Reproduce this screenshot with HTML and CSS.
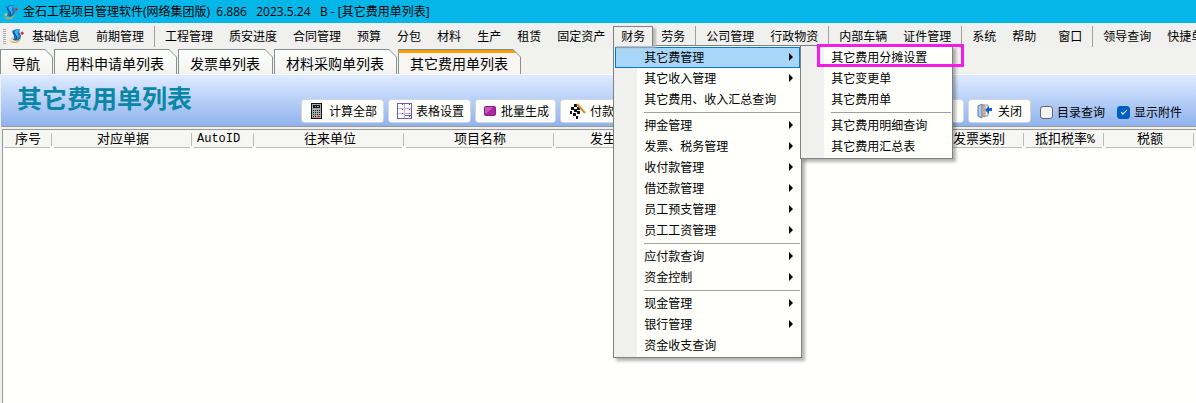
FILE: index.html
```html
<!DOCTYPE html>
<html lang="zh-CN">
<head>
    <meta charset="UTF-8">
    <meta name="viewport" content="width=device-width, initial-scale=1.0">
    <title>其它费用单列表</title>
    <link rel="stylesheet" href="styles.css">
</head>
<body>

<svg class="defs" width="0" height="0">
    <symbol id="logo" viewBox="0 0 16 16">
        <path d="M4 2Q8 0 12 1Q10 3 12 6Q14 9 11 12Q8 14 4 12Q6 10 5 7Q3 4 4 2Z" fill="#0b78c8"/>
        <path d="M6 3Q8 1 11 2Q8 4 10 7Q11 9 9 11Q9 8 7 6Z" fill="#3fb6f2"/>
        <path d="M4 3Q5 6 8 8Q9 10 7 12" fill="none" stroke="#123a78"/>
        <path d="M0 12Q3 15 8 14Q12 12 13 8Q13 13 9 15Q3 17 0 12Z" fill="#e9a63a"/>
        <path d="M1 11Q3 9 5 9Q3 11 5 13Z" fill="#f3c56c"/>
        <path d="M14 3L15 4L16 5L15 6L14 7L13 6L12 5L13 4Z" fill="#e0262b"/>
    </symbol>
</svg>

<header class="titlebar">
    <svg class="logo"><use href="#logo"/></svg>
    <span class="caption">金石工程项目管理软件(网络集团版)  6.886   2023.5.24   B - [其它费用单列表]</span>
</header>

<nav class="menubar">
    <span class="grip"></span>
    <svg class="logo"><use href="#logo"/></svg>
    <button>基础信息</button>
    <button>前期管理</button>
    <i class="sep"></i>
    <button>工程管理</button>
    <button>质安进度</button>
    <button>合同管理</button>
    <button>预算</button>
    <button>分包</button>
    <button>材料</button>
    <button>生产</button>
    <button>租赁</button>
    <button>固定资产</button>
    <div class="menu-open">
        <button class="current">财务</button>
        <ul class="menu">
            <li class="active">
                <button class="more">其它费管理</button>
                <ul class="menu submenu">
                    <li class="marked"><button>其它费用分摊设置</button></li>
                    <li><button>其它变更单</button></li>
                    <li><button>其它费用单</button></li>
                    <li class="line"></li>
                    <li><button>其它费用明细查询</button></li>
                    <li><button>其它费用汇总表</button></li>
                </ul>
            </li>
            <li><button class="more">其它收入管理</button></li>
            <li><button>其它费用、收入汇总查询</button></li>
            <li class="line"></li>
            <li><button class="more">押金管理</button></li>
            <li><button class="more">发票、税务管理</button></li>
            <li><button class="more">收付款管理</button></li>
            <li><button class="more">借还款管理</button></li>
            <li><button class="more">员工预支管理</button></li>
            <li><button class="more">员工工资管理</button></li>
            <li class="line"></li>
            <li><button class="more">应付款查询</button></li>
            <li><button class="more">资金控制</button></li>
            <li class="line"></li>
            <li><button class="more">现金管理</button></li>
            <li><button class="more">银行管理</button></li>
            <li><button>资金收支查询</button></li>
        </ul>
    </div>
    <button>劳务</button>
    <i class="sep"></i>
    <button>公司管理</button>
    <button>行政物资</button>
    <i class="sep"></i>
    <button>内部车辆</button>
    <button>证件管理</button>
    <i class="sep"></i>
    <button>系统</button>
    <button>帮助</button>
    <button class="window">窗口</button>
    <i class="sep"></i>
    <button>领导查询</button>
    <button>快捷单</button>
</nav>

<div class="tabs" role="tablist">
    <button class="tab" role="tab"><span>导航</span></button>
    <button class="tab" role="tab"><span>用料申请单列表</span></button>
    <button class="tab" role="tab"><span>发票单列表</span></button>
    <button class="tab" role="tab"><span>材料采购单列表</span></button>
    <button class="tab selected" role="tab" aria-selected="true"><span>其它费用单列表</span></button>
</div>

<section class="toolbar">
    <h1>其它费用单列表</h1>
    <div class="actions">
        <button>
            <svg viewBox="0 0 16 16" shape-rendering="crispEdges">
                <path d="M2 0H13V16H2Z" fill="#111"/>
                <path d="M3 1H12V15H3Z" fill="#aaa"/>
                <path d="M4 2H11V5H4Z" fill="#111"/>
                <path d="M6 3H7V4H6ZM8 3H10V4H8Z" fill="#2bd5e8"/>
                <path d="M4 7H5V8H4ZM6 7H7V8H6ZM8 7H9V8H8ZM10 7H11V8H10ZM4 9H5V10H4ZM6 9H7V10H6ZM8 9H9V10H8ZM10 9H11V10H10ZM4 11H5V12H4ZM6 11H7V12H6ZM8 11H9V12H8ZM10 11H11V12H10ZM4 13H5V14H4ZM6 13H7V14H6Z" fill="#222"/>
                <path d="M8 13H11V14H8Z" fill="#e3221b"/>
            </svg>
            计算全部
        </button>
        <button>
            <svg viewBox="0 0 16 16" shape-rendering="crispEdges">
                <path d="M1 0H16V16H1Z" fill="#6a5fc0"/>
                <path d="M2 1H8V5H2ZM9 1H15V5H9ZM2 6H8V10H2ZM9 6H15V10H9ZM2 11H8V15H2ZM9 11H15V12H9ZM9 13H15V15H9Z" fill="#fff"/>
                <path d="M8 1H9V15H8ZM2 5H15V6H2ZM2 10H15V11H2Z" fill="#b9b4ea"/>
                <path d="M6 1H7V2H6ZM13 1H14V2H13ZM6 6H7V7H6ZM13 6H14V7H13ZM6 10H7V11H6ZM13 10H14V11H13ZM13 13H14V14H13Z" fill="#d81e3c"/>
            </svg>
            表格设置
        </button>
        <button>
            <svg class="narrow" viewBox="1 0 14 16">
                <rect x="2" y="3" width="12" height="10" rx="2" fill="#8c1a86"/>
                <path d="M3 5Q3 4 4 4H12L4 11Q3 11 3 10Z" fill="#c558bd"/>
                <path d="M12 4Q13 4 13 5V11Q13 12 12 12H4Z" fill="#a92a9f"/>
            </svg>
            批量生成
        </button>
        <button>
            <svg class="wide" viewBox="0 0 18 16">
                <path d="M7 1L13 6L9 14L2 9Z" fill="#fff"/>
                <path d="M6 1H9V4H6ZM3 4H6V7H3ZM9 4H12V7H9ZM6 6H9V9H6ZM2 8H4V11H2ZM9 8H12V11H9ZM5 10H8V13H5ZM8 13H10V16H8Z" fill="#111"/>
                <path d="M9 1L17 10" stroke="#d28a2a" stroke-width="2"/>
            </svg>
            付款
        </button>
    </div>
    <div class="actions right">
        <button class="print">
            <svg viewBox="0 0 16 16"><path d="M2 6H14V12H2ZM4 2H12V6H4Z" fill="#8091a8"/></svg>
            打印
        </button>
        <button>
            <svg viewBox="0 0 16 16">
                <path d="M5 2H12V13H5Z" fill="#eef2f8" stroke="#8a98b4"/>
                <path d="M2 3L6 1V15L2 13Z" fill="#a9cdf0" stroke="#5878ac"/>
                <path d="M7 2L9 3V14L7 13Z" fill="#f6c9a0" stroke="#b88868"/>
                <path d="M16 5V8H13V11L9 7L13 3V5Z" fill="#0f5fd6"/>
            </svg>
            关闭
        </button>
        <label><input type="checkbox">目录查询</label>
        <label><input type="checkbox" checked>显示附件</label>
    </div>
</section>

<main class="grid">
    <table>
        <colgroup>
            <col class="w50"><col class="w140"><col class="w62"><col class="w150"><col class="w150">
            <col class="w122"><col class="w256"><col class="w92"><col class="w80"><col class="w90"><col class="w90">
        </colgroup>
        <thead>
            <tr>
                <th>序号</th>
                <th>对应单据</th>
                <th class="left">AutoID</th>
                <th>往来单位</th>
                <th>项目名称</th>
                <th>发生金额</th>
                <th></th>
                <th>发票类别</th>
                <th>抵扣税率%</th>
                <th>税额</th>
                <th></th>
            </tr>
        </thead>
    </table>
</main>

</body>
</html>
```
FILE: styles.css
```css
* {
    box-sizing: border-box;
}
body {
    margin: 0;
    min-height: 100vh;
    display: flex;
    flex-direction: column;
    overflow: hidden;
    background: #f0f0ee;
    color: #000;
    font: 12px/20px "Noto Sans CJK SC", sans-serif;
}
button {
    margin: 0;
    padding: 0;
    border: 0;
    background: none;
    color: inherit;
    font: inherit;
    white-space: nowrap;
}
.defs {
    position: absolute;
}
.logo {
    flex: none;
    width: 15px;
    height: 16px;
}

/* title bar */
.titlebar {
    display: flex;
    align-items: center;
    height: 23px;
    padding-left: 3px;
    gap: 5px;
    background: #04b7e8;
    font-family: "Open Sans", "Noto Sans CJK SC", sans-serif;
}
.caption {
    white-space: pre;
}

/* menu bar */
.menubar {
    display: flex;
    align-items: center;
    height: 26px;
    padding-left: 3px;
    white-space: nowrap;
}
.menubar > button,
.current {
    flex: none;
    padding: 0 8px;
}
.menubar > .window {
    margin-left: 6px;
}
.grip {
    flex: none;
    width: 3px;
    height: 15px;
    margin-right: 3px;
    background: repeating-linear-gradient(#aaa 0 1px, transparent 1px 2px);
}
.sep {
    flex: none;
    width: 1px;
    height: 21px;
    margin: 0 2px;
    background: #a0a0a0;
}
.menu-open {
    position: relative;
    flex: none;
}
.current {
    position: relative;
    z-index: 3;
    height: 20px;
    line-height: 18px;
    background: #f0f0ee;
    box-shadow: inset 1px 1px #808080, inset -1px 0 #808080, 3px 2px 2px #bbb;
}

/* drop-down menus */
.menu {
    position: absolute;
    z-index: 2;
    top: 100%;
    left: 0;
    width: 189px;
    margin: -1px 0 0;
    padding: 1px;
    list-style: none;
    background: linear-gradient(90deg, #f0f1ee 23px, #fffffc 23px);
    border: 1px solid #808080;
    box-shadow: 3px 3px 3px rgba(0, 0, 0, 0.3);
}
.menu li {
    position: relative;
    height: 21px;
}
.menu li > button {
    width: 100%;
    height: 21px;
    padding: 0 7px 2px 29px;
    text-align: left;
    line-height: 19px;
}
.menu .more {
    display: flex;
    align-items: center;
    justify-content: space-between;
}
.more::after {
    content: "";
    border: 4px solid transparent;
    border-left-color: #000;
    border-right: 0;
}
.menu .line {
    height: 5px;
    margin-left: 29px;
    padding-top: 2px;
}
.line::after {
    content: "";
    display: block;
    height: 1px;
    background: #a0a0a0;
}
.active > .more {
    background: #a8d6f8;
    box-shadow: inset 0 0 0 1px #0078d7;
}
.menu .submenu {
    top: -1px;
    left: 185px;
    width: 153px;
}
.marked::after {
    content: "";
    position: absolute;
    top: -3px;
    left: 15px;
    width: 141px;
    height: 17px;
    border: 3px solid #f41ce8;
}

/* document tabs */
.tabs {
    display: flex;
    gap: 1px;
    height: 25px;
    background: #f2f2ef;
    font-size: 14px;
}
.tab {
    padding: 1px;
    padding-bottom: 0;
    background: #839292;
    clip-path: polygon(0 0, calc(100% - 8px) 0, 100% 8px, 100% 100%, 0 100%);
}
.tab span {
    display: block;
    height: 24px;
    padding: 3px 12px 0 11px;
    line-height: 20px;
    background: linear-gradient(#fffffd, #f3f3f0);
    clip-path: polygon(0 0, calc(100% - 7px) 0, 100% 7px, 100% 100%, 0 100%);
}
.tab.selected span {
    background: linear-gradient(#ff9c00 3px, #f8f5f3 3px);
}

/* toolbar */
.toolbar {
    display: flex;
    align-items: flex-end;
    height: 53px;
    padding: 0 14px 4px 16px;
    margin-left: 1px;
    border-top: 1px solid #fff;
    border-bottom: 1px solid #999;
    background: linear-gradient(#dfebff, #8fb3ee);
}
h1 {
    flex: none;
    width: 285px;
    margin: 0;
    align-self: flex-start;
    color: #0a87a6;
    font-size: 25px;
    line-height: 44px;
    font-weight: bold;
}
.actions {
    display: flex;
    align-items: center;
    gap: 6px;
    white-space: nowrap;
}
.actions.right {
    margin-left: auto;
}
.actions button {
    display: flex;
    align-items: center;
    gap: 4px;
    height: 22px;
    padding: 0 6px 0 7px;
    border-radius: 3px;
    background: #fffffb;
    box-shadow: 0 0 0 1px #d4d8dc;
}
.actions.right button {
    gap: 6px;
    padding-right: 8px;
}
.actions.right .print {
    padding-right: 16px;
}
.actions svg {
    width: 16px;
    height: 16px;
}
.actions .narrow {
    width: 14px;
}
.actions .wide {
    width: 18px;
}
.actions label {
    display: flex;
    align-items: center;
    gap: 4px;
    margin-left: 4px;
    padding-top: 2px;
}
.actions label + label {
    margin-left: 6px;
}
.actions input {
    appearance: none;
    width: 13px;
    height: 13px;
    margin: 0;
    border: 1px solid #666;
    border-radius: 3px;
    background: #f4f4f2;
}
.actions input:checked {
    border-color: #005fb8;
    background: #0060c4;
}
.actions input:checked::after {
    content: "";
    display: block;
    width: 5px;
    height: 2px;
    margin: 3px 0 0 3px;
    border: solid #fff;
    border-width: 0 0 1px 1px;
    transform: rotate(-45deg);
}

/* data grid */
.grid {
    flex: 1;
    margin: 2px 0 0 2px;
    overflow: hidden;
    border: solid #999;
    border-width: 1px 0 0 1px;
    background: #fffffe;
}
table {
    width: 1282px;
    table-layout: fixed;
    border-collapse: separate;
    border-spacing: 0;
    background: #f6f6f3;
}
th {
    height: 18px;
    padding: 1px 0 0;
    font-size: 13px;
    line-height: 17px;
    font-weight: normal;
    white-space: nowrap;
    font-family: "Liberation Mono", "Noto Sans CJK SC", monospace;
    background:
        linear-gradient(#bbb, #bbb) right 1px top 3px / 1px 13px no-repeat,
        linear-gradient(90deg, transparent 1px, #bbb 1px calc(100% - 3px), transparent calc(100% - 3px)) bottom / 100% 1px no-repeat;
}
th.left {
    padding-left: 4px;
    font-size: 12px;
    text-align: left;
}
.w50 { width: 50px; }
.w62 { width: 62px; }
.w80 { width: 80px; }
.w90 { width: 90px; }
.w92 { width: 92px; }
.w122 { width: 122px; }
.w140 { width: 140px; }
.w150 { width: 150px; }
.w256 { width: 256px; }
```
